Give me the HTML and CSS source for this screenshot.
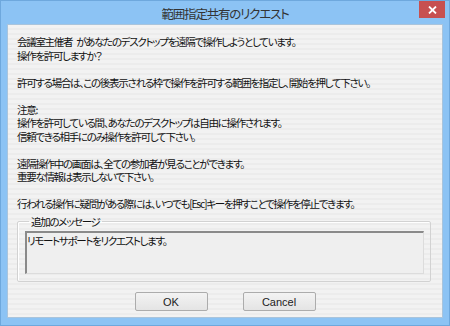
FILE: index.html
```html
<!DOCTYPE html>
<html lang="ja">
<head>
    <meta charset="UTF-8">
    <title>範囲指定共有のリクエスト</title>
    <link rel="stylesheet" href="styles.css">
</head>
<body>
    <div class="window">
        <!-- Title bar -->
        <div class="titlebar">
            <span class="title">範囲指定共有のリクエスト</span>
            <button class="close" title="閉じる">
                <svg width="9" height="8" viewBox="0 0 9 8">
                    <path d="M1 0.5 L8 7.5 M8 0.5 L1 7.5" stroke="#fff" stroke-width="1.8"/>
                </svg>
            </button>
        </div>

        <!-- Client area -->
        <div class="client">
            <p class="msg">会議室主催者 があなたのデスクトップを遠隔で操作しようとしています。<br>操作を許可しますか？</p>
            <p class="msg">許可する場合は、この後表示される枠で操作を許可する範囲を指定し、開始を押して下さい。</p>
            <p class="msg">注意:<br>操作を許可している間、あなたのデスクトップは自由に操作されます。<br>信頼できる相手にのみ操作を許可して下さい。</p>
            <p class="msg">遠隔操作中の画面は、全ての参加者が見ることができます。<br>重要な情報は表示しないで下さい。</p>
            <p class="msg last">行われる操作に疑問がある際には、いつでも[Esc]キーを押すことで操作を停止できます。</p>

            <fieldset class="group">
                <legend>追加のメッセージ</legend>
                <div class="note">リモートサポートをリクエストします。</div>
            </fieldset>

            <div class="actions">
                <button class="btn">OK</button>
                <button class="btn">Cancel</button>
            </div>
        </div>
    </div>
</body>
</html>
```

FILE: styles.css
```css
* {
    box-sizing: border-box;
}

body {
    margin: 0;
    font-family: "Noto Sans CJK JP", "Noto Sans", sans-serif;
    font-feature-settings: "palt";
    background: #8cc3f4;
}

.window {
    width: 450px;
    height: 326px;
    background: #8cc3f4;
    border: 1px solid #6ea8dd;
    padding: 0 6px 7px 6px;
    display: flex;
    flex-direction: column;
}

.titlebar {
    height: 23px;
    display: grid;
    grid-template-columns: 1fr auto 1fr;
    margin: 0 -6px;
}

.title {
    grid-column: 2;
    font-size: 12.5px;
    letter-spacing: -1.2px;
    line-height: 26px;
    color: #333;
}

.close {
    grid-column: 3;
    justify-self: end;
    align-self: start;
    width: 26px;
    height: 17px;
    margin-right: 4px;
    border: none;
    padding: 0;
    background: #c75050;
    display: flex;
    align-items: center;
    justify-content: center;
}

.client {
    flex: 1;
    border: 1px solid #a9c4dc;
    background: repeating-linear-gradient(to bottom, #f2f2f2 0, #f2f2f2 3px, #ececec 3px, #ececec 5px);
    padding: 10px 10px 0 9px;
    display: flex;
    flex-direction: column;
}

.msg {
    margin: 0 0 13.5px 0;
    font-size: 10.5px;
    letter-spacing: -1.3px;
    word-spacing: 3px;
    line-height: 13.5px;
    color: #111;
}

.msg.last {
    margin-bottom: 4px;
}

.group {
    margin: 0 1px 0 0;
    padding: 3px 6px 7px 7px;
    border: 1px solid #d2d2d2;
    border-radius: 2px;
    box-shadow: inset 1px 1px #fff;
}

.group legend {
    font-size: 10.5px;
    letter-spacing: -1.3px;
    line-height: 13.5px;
    padding: 0 2px;
    margin-left: 4px;
    color: #111;
}

.note {
    height: 43px;
    border-top: 2px solid #8a8a8a;
    border-left: 2px solid #8a8a8a;
    border-right: 1px solid #dcdcdc;
    border-bottom: 1px solid #dcdcdc;
    background: #efefef;
    font-size: 10.5px;
    letter-spacing: -1.3px;
    line-height: 13.5px;
    padding: 1px 0 0 0;
    color: #111;
}

.actions {
    display: flex;
    justify-content: center;
    gap: 35px;
    margin-top: 10px;
    padding-left: 1px;
}

.btn {
    width: 73px;
    height: 19px;
    padding: 0;
    font-family: "Liberation Sans", Arial, sans-serif;
    font-size: 11px;
    color: #222;
    border: 1px solid #acacac;
    border-radius: 2px;
    background: linear-gradient(#f3f3f3, #e4e4e4);
}
```
